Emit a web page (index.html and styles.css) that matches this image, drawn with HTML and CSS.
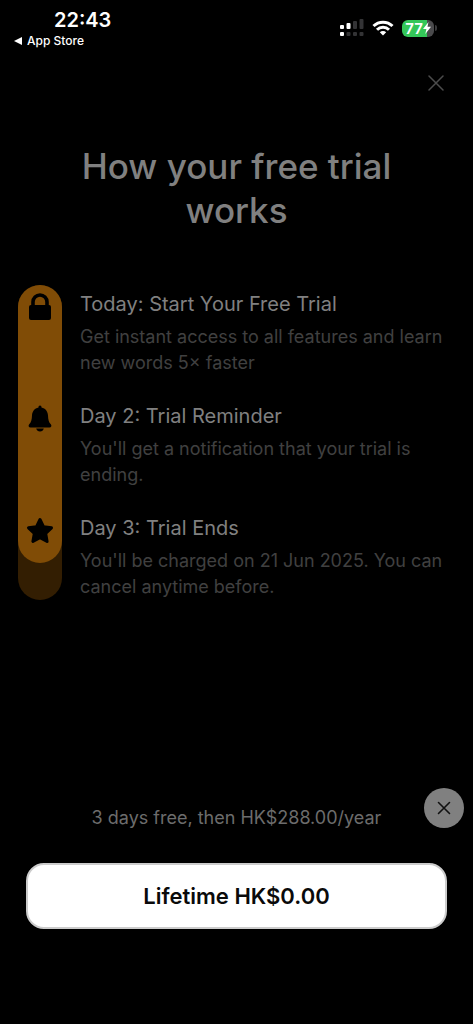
FILE: index.html
```html
<!DOCTYPE html>
<html lang="en">
<head>
<meta charset="utf-8">
<meta name="viewport" content="width=device-width, initial-scale=1">
<title>How your free trial works</title>
<link rel="stylesheet" href="styles.css">
</head>
<body>
<div class="screen">
  <header class="status">
    <div class="status-left">
      <time class="clock">22:43</time>
      <a class="back" href="#"><svg width="8" height="8" viewBox="0 0 8 8" aria-hidden="true"><path d="M0 4 8 0V8Z" fill="currentColor"/></svg>App Store</a>
    </div>
    <div class="status-right">
      <svg class="signal" width="24" height="18" viewBox="0 0 24 18" aria-hidden="true">
        <g fill="#fff"><rect x="0" y="6" width="4" height="4" rx="1"/><rect x="6.500" y="4" width="4" height="6" rx="1"/><rect x="0" y="13" width="4" height="4" rx="1"/></g>
        <g fill="#333335"><rect x="13" y="2" width="4" height="8" rx="1"/><rect x="19.500" y="0" width="4" height="10" rx="1"/><rect x="6.500" y="13" width="4" height="4" rx="1"/><rect x="13" y="13" width="4" height="4" rx="1"/><rect x="19.500" y="13" width="4" height="4" rx="1"/></g>
      </svg>
      <svg class="wifi" width="22" height="16" viewBox="0 0 22 16" fill="none" stroke="#fff" stroke-width="3" aria-hidden="true">
        <path d="M1.500 6A13.600 13.600 0 0 1 20.500 6"/><path d="M5 9.700A8.500 8.500 0 0 1 17 9.700"/><path d="M11 15.500 7.800 12.300A4.600 4.600 0 0 1 14.200 12.300Z" fill="#fff" stroke="none"/>
      </svg>
      <div class="battery">
        <div class="battery-body"><span>77</span><svg width="8" height="12" viewBox="0 0 8 12" aria-hidden="true"><path d="M5.500 0 0 7H3.400L2.300 12 8 4.800H4.500Z" fill="#fff"/></svg></div>
        <div class="battery-tip"></div>
      </div>
    </div>
  </header>

  <main class="content">
    <div class="topbar">
      <button class="close" type="button" aria-label="Close"><svg width="16" height="16" viewBox="0 0 16 16" fill="none" stroke="currentColor" stroke-width="1.500" stroke-linecap="round"><path d="M1 1 15 15M15 1 1 15"/></svg></button>
    </div>
    <h1 class="title">How your free trial works</h1>
    <section class="timeline">
      <div class="rail">
        <div class="rail-fill">
          <svg width="28" height="28" viewBox="0 0 28 28" aria-hidden="true"><rect x="3" y="12" width="22" height="15" rx="2" fill="#000"/><path d="M7 14V9A7 7 0 0 1 21 9V14" fill="none" stroke="#000" stroke-width="3.600"/></svg>
          <svg width="28" height="28" viewBox="0 0 28 28" aria-hidden="true"><path d="M14 0.500C15 .5 15.600 1.300 15.500 2.400C19.500 3.200 21.800 6.300 22 10.500C22.200 15 22.800 17.200 24.800 19.200C26 20.500 25.300 22.500 23.500 22.500H4.500C2.700 22.500 2 20.500 3.200 19.200C5.200 17.200 5.800 15 6 10.500C6.200 6.300 8.500 3.200 12.500 2.400C12.400 1.300 13 .5 14 .5Z"/><path d="M10.200 23.500H17.800C17.300 25.500 16 26.500 14 26.500S10.700 25.500 10.200 23.500Z"/></svg>
          <svg width="28" height="28" viewBox="0 0 28 28" aria-hidden="true"><path d="M14 2.500 17.500 9.700 25.500 10.800 19.700 16.400 21.100 24.400 14 20.600 6.900 24.400 8.300 16.400 2.500 10.800 10.500 9.700Z" stroke="#000" stroke-width="3" stroke-linejoin="round"/></svg>
        </div>
      </div>
      <div class="steps">
        <article><h2>Today: Start Your Free Trial</h2><p>Get instant access to all features and learn new words 5× faster</p></article>
        <article><h2>Day 2: Trial Reminder</h2><p>You'll get a notification that your trial is ending.</p></article>
        <article><h2>Day 3: Trial Ends</h2><p>You'll be charged on 21 Jun 2025. You can cancel anytime before.</p></article>
      </div>
    </section>
  </main>

  <footer class="offer">
    <div class="offer-row">
      <p class="price">3 days free, then HK$288.00/year</p>
      <button class="dismiss" type="button" aria-label="Dismiss offer"><svg width="14" height="14" viewBox="0 0 14 14" fill="none" stroke="currentColor" stroke-width="1.600" stroke-linecap="round"><path d="M1.500 1.500 12.500 12.500M12.500 1.500 1.500 12.500"/></svg></button>
    </div>
    <button class="buy" type="button">Lifetime HK$0.00</button>
  </footer>
</div>
</body>
</html>
```
FILE: styles.css
```css
* { box-sizing: border-box; }

body {
  margin: 0;
  background: #000;
  font-family: Inter, "Liberation Sans", sans-serif;
}

h1, h2, p { margin: 0; font-weight: 400; }

button {
  border: 0;
  padding: 0;
  background: none;
  font: inherit;
  cursor: pointer;
}

svg { display: block; flex: none; }

.screen {
  min-height: 100vh;
  display: flex;
  flex-direction: column;
}

/* Status bar */
.status {
  display: flex;
  justify-content: space-between;
  padding: 8px 36px 0 14px;
  color: #fff;
}

.clock {
  display: block;
  padding-left: 40px;
  font-size: 20px;
  line-height: 24px;
  font-weight: 600;
}

.back {
  display: flex;
  align-items: center;
  gap: 5px;
  color: #fff;
  font-size: 12px;
  line-height: 18px;
  font-weight: 500;
  text-decoration: none;
}

.status-right {
  display: flex;
  align-items: center;
  height: 40px;
}

.wifi { margin: 0 8px; }

.battery {
  display: flex;
  align-items: center;
  gap: 1px;
}

.battery-body {
  display: flex;
  align-items: center;
  justify-content: center;
  width: 32px;
  height: 17px;
  border-radius: 6px;
  background: linear-gradient(90deg, #34c759 77%, #4a4a4c 77%);
  font-size: 15px;
  line-height: 17px;
  font-weight: 600;
}

.battery-tip {
  width: 2px;
  height: 6px;
  border-radius: 0 2px 2px 0;
  background: #3a3a3c;
}

/* Trial explanation */
.content {
  flex: 1;
  padding: 0 18px;
}

.topbar {
  display: flex;
  justify-content: flex-end;
  padding-top: 14px;
}

.close {
  display: grid;
  place-items: center;
  width: 38px;
  height: 38px;
  color: #4c4c4c;
}

.title {
  padding: 42px 50px 0;
  color: #808080;
  font-size: 35px;
  line-height: 44px;
  font-weight: 500;
  text-align: center;
}

.timeline {
  display: flex;
  gap: 18px;
  padding-top: 53px;
}

.rail {
  flex: none;
  width: 44px;
  border-radius: 22px;
  background: #331e02;
}

.rail-fill {
  display: flex;
  flex-direction: column;
  align-items: center;
  gap: 84px;
  padding: 8px 0 18px;
  border-radius: 22px;
  background: #804c06;
}

.steps {
  display: flex;
  flex-direction: column;
  gap: 26px;
  padding-top: 5px;
}

.steps h2 {
  padding-bottom: 6px;
  color: #808080;
  font-size: 20px;
  line-height: 28px;
}

.steps p {
  color: #404040;
  font-size: 18px;
  line-height: 26px;
}

/* Offer */
.offer { padding-bottom: 95px; }

.offer-row {
  display: grid;
  grid-template-columns: 40px 1fr 40px;
  padding: 0 9px;
}

.price {
  grid-column: 2;
  align-self: end;
  color: #6c6c6c;
  font-size: 18px;
  line-height: 20px;
  text-align: center;
}

.dismiss {
  display: grid;
  place-items: center;
  width: 40px;
  height: 40px;
  border-radius: 50%;
  background: #808080;
  color: #111;
}

.buy {
  display: block;
  width: calc(100% - 52px);
  height: 66px;
  margin: 35px 26px 0;
  border: 2px solid #ccc;
  border-radius: 18px;
  background: #fff;
  color: #0a0a0a;
  font-size: 22px;
  font-weight: 600;
}
```
